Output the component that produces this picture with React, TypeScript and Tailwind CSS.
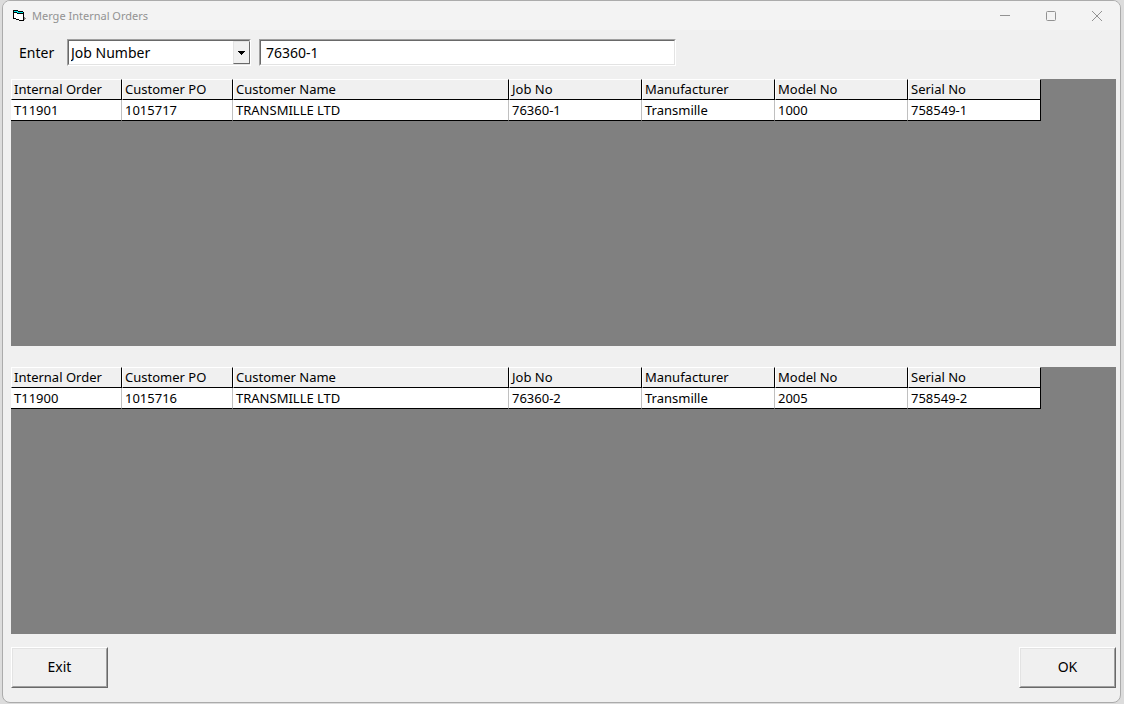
import { useState } from "react";

type Order = {
  order: string;
  po: string;
  customer: string;
  job: string;
  manufacturer: string;
  model: string;
  serial: string;
};

const columns: { key: keyof Order; label: string; width: string }[] = [
  { key: "order", label: "Internal Order", width: "w-[111px]" },
  { key: "po", label: "Customer PO", width: "w-[111px]" },
  { key: "customer", label: "Customer Name", width: "w-[276px]" },
  { key: "job", label: "Job No", width: "w-[133px]" },
  { key: "manufacturer", label: "Manufacturer", width: "w-[133px]" },
  { key: "model", label: "Model No", width: "w-[133px]" },
  { key: "serial", label: "Serial No", width: "w-[133px]" },
];

const sourceOrders: Order[] = [
  { order: "T11901", po: "1015717", customer: "TRANSMILLE LTD", job: "76360-1", manufacturer: "Transmille", model: "1000", serial: "758549-1" },
];

const targetOrders: Order[] = [
  { order: "T11900", po: "1015716", customer: "TRANSMILLE LTD", job: "76360-2", manufacturer: "Transmille", model: "2005", serial: "758549-2" },
];

function OrderGrid({ label, rows }: { label: string; rows: Order[] }) {
  return (
    <div className="min-h-40 flex-1 overflow-auto bg-[#808080]">
      <table aria-label={label} className="w-[1030px] table-fixed border-separate border-spacing-0 text-left text-[13px] leading-5">
        <thead>
          <tr>
            {columns.map((c) => (
              <th
                key={c.key}
                scope="col"
                className={`${c.width} h-[21px] border-t border-r border-b border-l border-t-white border-r-black border-b-black border-l-white bg-[#f0f0f0] p-0 pl-0.5 font-normal leading-[19px] whitespace-nowrap`}
              >
                {c.label}
              </th>
            ))}
          </tr>
        </thead>
        <tbody>
          {rows.map((r) => (
            <tr key={r.order}>
              {columns.map((c) => (
                <td
                  key={c.key}
                  className="h-[21px] border-r border-b border-r-[#c0c0c0] border-b-black bg-white p-0 pl-[3px] whitespace-nowrap last:border-r-black"
                >
                  {r[c.key]}
                </td>
              ))}
            </tr>
          ))}
        </tbody>
      </table>
    </div>
  );
}

function FormIcon() {
  return (
    <svg className="size-4" viewBox="0 0 16 16" shapeRendering="crispEdges" aria-hidden="true">
      <path d="M2 3h4v1h5v8H7v-1H4v-1H2z" fill="#fff" />
      <path d="M2 3h4v1H2zM5 4h6v1H5z" fill="#00e5e5" />
      <path d="M1 2h5v1H1zM6 3h5v1H6zM1 2h1v9H1zM2 4h3v1H2zM5 5h6v1H5zM11 4h1v9h-1zM1 10h3v1H1zM4 11h3v1H4zM7 12h5v1H7z" fill="#000" />
      <path d="M12 9h1v1h1v1h-1v1h-1z" fill="#888" />
    </svg>
  );
}

function TitleBar() {
  const control = "flex h-full w-[46px] items-center justify-center";
  return (
    <header className="flex h-[29px] shrink-0 items-center bg-[#f3f3f3] pl-[9px] text-[#929292]">
      <FormIcon />
      <h1 className="ml-1 flex-1 pt-px text-[11px] leading-4">Merge Internal Orders</h1>
      <button type="button" aria-label="Minimize" className={control}>
        <svg className="size-3" viewBox="0 0 12 12" fill="none" stroke="currentColor"><path d="M1 5.5h10" /></svg>
      </button>
      <button type="button" aria-label="Maximize" className={control}>
        <svg className="size-3" viewBox="0 0 12 12" fill="none" stroke="currentColor"><rect x="1.5" y="1.5" width="9" height="9" rx="1" /></svg>
      </button>
      <button type="button" aria-label="Close" className={control}>
        <svg className="size-3" viewBox="0 0 12 12" fill="none" stroke="currentColor"><path d="M1 1l10 10M11 1L1 11" /></svg>
      </button>
    </header>
  );
}

const sunken = "border border-t-[#a0a0a0] border-l-[#a0a0a0] border-r-white border-b-white";
const sunkenInner = "border border-t-[#696969] border-l-[#696969] border-r-[#e3e3e3] border-b-[#e3e3e3]";

function PushButton({ children }: { children: string }) {
  return (
    <button
      type="button"
      className="flex h-[41px] w-[97px] border border-t-white border-r-[#696969] border-b-[#696969] border-l-white bg-[#f0f0f0] text-sm"
    >
      <span className="flex h-full w-full items-center justify-center border border-t-[#e3e3e3] border-r-[#a0a0a0] border-b-[#a0a0a0] border-l-[#e3e3e3] pb-0.5">
        {children}
      </span>
    </button>
  );
}

export default function App() {
  const [field, setField] = useState("Job Number");
  const [term, setTerm] = useState("76360-1");

  return (
    <div className="flex min-h-screen bg-[#dcdcdc] pr-[3px] pb-px pl-0.5 font-['Noto_Sans','Open_Sans',sans-serif] text-black">
      <main className="flex flex-1 flex-col overflow-hidden rounded-lg border border-[#ababab] bg-[#f0f0f0]">
        <TitleBar />
        <form className="flex items-center pt-[9px] pl-4 text-sm" onSubmit={(e) => e.preventDefault()}>
          <label htmlFor="field" className="w-12">Enter</label>
          <div className={`relative w-[184px] ${sunken}`}>
            <div className={sunkenInner}>
              <select
                id="field"
                value={field}
                onChange={(e) => setField(e.target.value)}
                className="block h-[23px] w-full appearance-none bg-white pl-0.5 outline-none"
              >
                <option>Job Number</option>
                <option>Internal Order</option>
                <option>Customer PO</option>
                <option>Serial No</option>
              </select>
            </div>
            <span className="pointer-events-none absolute inset-y-px right-0 flex w-[17px] items-center justify-center border border-t-[#e3e3e3] border-r-[#696969] border-b-[#696969] border-l-[#e3e3e3] bg-[#f0f0f0]">
              <svg className="h-1 w-[7px]" viewBox="0 0 7 4" shapeRendering="crispEdges" aria-hidden="true">
                <path d="M0 0h7v1H6v1H5v1H4v1H3V3H2V2H1V1H0z" />
              </svg>
            </span>
          </div>
          <div className={`ml-2 w-[417px] ${sunken}`}>
            <div className={sunkenInner}>
              <input
                type="text"
                aria-label="Search value"
                value={term}
                onChange={(e) => setTerm(e.target.value)}
                className="block h-[23px] w-full bg-white pl-[5px] outline-none"
              />
            </div>
          </div>
        </form>
        <div className="flex flex-1 flex-col gap-[21px] pt-[13px] pr-1 pl-2">
          <OrderGrid label="Orders to merge" rows={sourceOrders} />
          <OrderGrid label="Merge into" rows={targetOrders} />
        </div>
        <footer className="flex justify-between pt-[13px] pr-1 pb-[14px] pl-2">
          <PushButton>Exit</PushButton>
          <PushButton>OK</PushButton>
        </footer>
      </main>
    </div>
  );
}
